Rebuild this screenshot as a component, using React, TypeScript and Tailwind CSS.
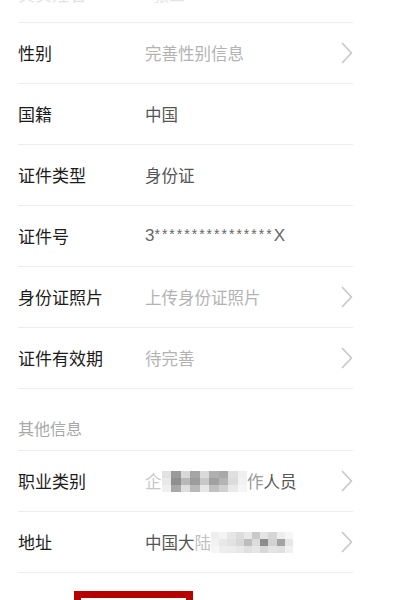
import React from "react";

const font = { fontFamily: '"Noto Sans CJK SC", "Noto Sans", sans-serif' };

function Chevron() {
  return (
    <svg width="12" height="22" viewBox="0 0 12 22" fill="none" className="shrink-0">
      <polyline points="1.5,1.5 10.5,11 1.5,20.5" stroke="#c8c8c8" strokeWidth="1.7" strokeLinecap="round" strokeLinejoin="round" />
    </svg>
  );
}

type RowProps = { label: string; value?: React.ReactNode; placeholder?: boolean; arrow?: boolean };

function Row({ label, value, placeholder, arrow }: RowProps) {
  return (
    <div className="flex h-[61px] items-center border-b border-[#ececec]">
      <div className="w-[127px] shrink-0 text-[17px] text-[#1c1c1c]">{label}</div>
      <div className={`flex-1 text-[16.5px] ${placeholder ? "text-[#b3b3b3]" : "text-[#555555]"}`}>{value}</div>
      {arrow ? <Chevron /> : null}
    </div>
  );
}

const occCells: string[][] = [
  ["#e2e2e2", "#9a9a9a", "#d8d8d8", "#a5a5a5", "#dadada", "#b0b0b0", "#a8a8a8", "#e0e0e0", "#efefef"],
  ["#e8e8e8", "#8f8f8f", "#b8b8b8", "#9c9c9c", "#c8c8c8", "#a0a0a0", "#b4b4b4", "#dcdcdc", "#f2f2f2"],
  ["#f0f0f0", "#a8a8a8", "#dedede", "#b8b8b8", "#e6e6e6", "#c0c0c0", "#d0d0d0", "#eaeaea", "#f5f5f5"],
];

const addrCells: string[][] = [
  ["#eeeeee", "#f4f4f4", "#e6e6e6", "#dcdcdc", "#e8e8e8", "#c9c9c9", "#e4e4e4", "#d6d6d6", "#eeeeee", "#f6f6f6"],
  ["#f2f2f2", "#e8e8e8", "#e2e2e2", "#d8d8d8", "#bdbdbd", "#dcdcdc", "#8c8c8c", "#d2d2d2", "#a3a3a3", "#e6e6e6"],
  ["#f6f6f6", "#eeeeee", "#ececec", "#e8e8e8", "#e0e0e0", "#e6e6e6", "#d8d8d8", "#e4e4e4", "#e0e0e0", "#f0f0f0"],
];

function Mosaic({ cells, cw }: { cells: string[][]; cw: number }) {
  return (
    <div className="flex flex-col">
      {cells.map((row, i) => (
        <div key={i} className="flex">
          {row.map((c, j) => (
            <div key={j} style={{ backgroundColor: c, width: cw, height: 7 }} />
          ))}
        </div>
      ))}
    </div>
  );
}

export default function App() {
  return (
    <div className="w-[408px] h-[600px] overflow-hidden bg-white" style={font}>
      <div className="pl-[18px] w-[353px]">
        <div className="flex h-[23px] items-start overflow-hidden border-b border-[#ececec]">
          <div className="flex h-[20px] shrink-0 items-end w-full -translate-y-[16px]">
            <div className="w-[135px] shrink-0 text-[17px] leading-[20px] text-[#e2e2e2]">真实姓名</div>
            <div className="text-[16px] leading-[20px] text-[#e6e6e6]">张三</div>
          </div>
        </div>
        <Row label="性别" value="完善性别信息" placeholder arrow />
        <Row label="国籍" value="中国" />
        <Row label="证件类型" value="身份证" />
        <Row
          label="证件号"
          value={
            <span className="flex items-start text-[#666666]" style={{ fontFamily: '"Liberation Sans", Arial, sans-serif' }}>
              <span className="text-[17px] leading-[20px]">3</span>
              <span className="text-[14px] leading-[16px] tracking-[2px]">****************</span>
              <span className="text-[17px] leading-[20px]">X</span>
            </span>
          }
        />
        <Row label="身份证照片" value="上传身份证照片" placeholder arrow />
        <Row label="证件有效期" value="待完善" placeholder arrow />
        <div className="flex h-[62px] items-end pb-[10px] border-b border-[#ececec]">
          <div className="text-[16px] text-[#a8a8a8]">其他信息</div>
        </div>
        <Row
          label="职业类别"
          value={
            <span className="flex items-center">
              <span className="text-[#c8c8c8]">企</span>
              <Mosaic cells={occCells} cw={9.5} />
              <span className="text-[#9a9a9a]">作</span>
              <span>人员</span>
            </span>
          }
          arrow
        />
        <Row
          label="地址"
          value={
            <span className="flex items-center">
              <span>中国大</span>
              <span className="text-[#c0c0c0]">陆</span>
              <Mosaic cells={addrCells} cw={8.2} />
            </span>
          }
          arrow
        />
      </div>
      <div className="ml-[74px] mt-[18px] w-[119px] h-[40px] border-[7px] border-[#b70000] bg-white" />
    </div>
  );
}
